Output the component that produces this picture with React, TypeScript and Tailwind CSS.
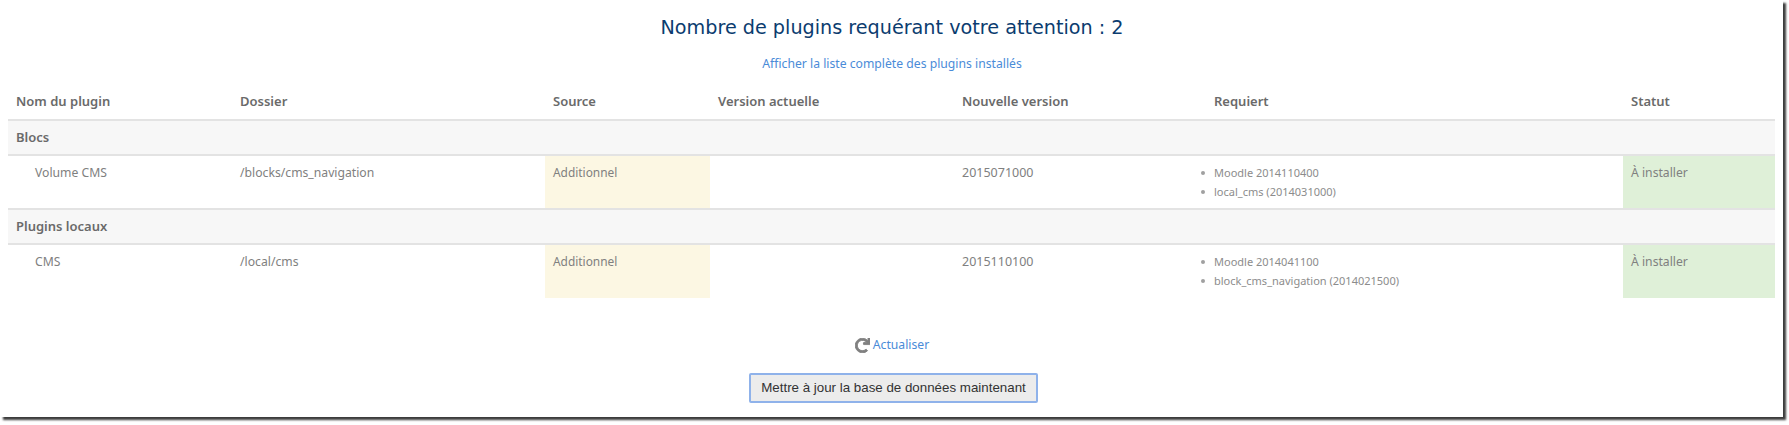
import { FaRedo } from 'react-icons/fa';

const sans = "font-['Noto_Sans',sans-serif]";

type Plugin = {
  group: string;
  name: string;
  folder: string;
  version: string;
  requires: string[];
};

const plugins: Plugin[] = [
  {
    group: 'Blocs',
    name: 'Volume CMS',
    folder: '/blocks/cms_navigation',
    version: '2015071000',
    requires: ['Moodle 2014110400', 'local_cms (2014031000)'],
  },
  {
    group: 'Plugins locaux',
    name: 'CMS',
    folder: '/local/cms',
    version: '2015110100',
    requires: ['Moodle 2014041100', 'block_cms_navigation (2014021500)'],
  },
];

const headers = [
  { label: 'Nom du plugin', width: 'w-[224px]' },
  { label: 'Dossier', width: 'w-[313px]' },
  { label: 'Source', width: 'w-[165px]' },
  { label: 'Version actuelle', width: 'w-[244px]' },
  { label: 'Nouvelle version', width: 'w-[252px]' },
  { label: 'Requiert', width: 'w-[417px]' },
  { label: 'Statut', width: 'w-[152px]' },
];

function PluginRows({ plugin, last }: { plugin: Plugin; last: boolean }) {
  return (
    <>
      <tr className="h-[35px] border-b-2 border-[#e3e3e3] bg-[#f7f7f7]">
        <td colSpan={7} className="px-2 align-middle text-[13px] font-semibold text-[#6a6a6a]">
          {plugin.group}
        </td>
      </tr>
      <tr className={`h-[54px] align-top text-[12.2px] text-[#808080] ${last ? '' : 'border-b-2 border-[#e3e3e3]'}`}>
        <td className="pl-[27px] pt-[8px]">{plugin.name}</td>
        <td className="px-2 pt-[8px]">{plugin.folder}</td>
        <td className="bg-[#fcf7e3] px-2 pt-[8px] text-[11.9px]">Additionnel</td>
        <td className="px-2 pt-[8px]" />
        <td className="px-2 pt-[8px] text-[12.5px]">{plugin.version}</td>
        <td className="px-2 pt-[7px]">
          <ul className="list-none text-[11px] leading-[19px] text-[#8c8c8c]">
            {plugin.requires.map((req) => (
              <li key={req} className="relative">
                <span className="absolute left-[-13px] top-[8px] size-[4px] rounded-full bg-[#a0a0a0]" />
                {req}
              </li>
            ))}
          </ul>
        </td>
        <td className="bg-[#dff0d8] px-2 pt-[8px]">À installer</td>
      </tr>
    </>
  );
}

export default function App() {
  return (
    <div className="h-[425px] w-[1789px] overflow-hidden bg-white">
      <div className={`h-[417px] w-[1783px] bg-white pt-[16px] shadow-[3px_3px_2px_#3c3c3c] ${sans}`}>
        <h2 className="ml-[8px] w-[1768px] text-center font-['DejaVu_Sans',sans-serif] text-[19.2px] leading-[24px] text-[#0b3c6f]">
          Nombre de plugins requérant votre attention : 2
        </h2>
        <p className="ml-[8px] mt-[15px] w-[1768px] text-center text-[12.2px] leading-[18px] text-[#4a8bd8]">
          Afficher la liste complète des plugins installés
        </p>
        <table className="ml-[8px] mt-[12px] w-[1767px] table-fixed border-collapse">
          <colgroup>
            {headers.map((h) => (
              <col key={h.label} className={h.width} />
            ))}
          </colgroup>
          <thead>
            <tr className="h-[35px] border-b-2 border-[#e3e3e3]">
              {headers.map((h) => (
                <th key={h.label} className="px-2 text-left align-middle text-[13px] font-semibold text-[#6a6a6a]">
                  {h.label}
                </th>
              ))}
            </tr>
          </thead>
          <tbody>
            {plugins.map((p, i) => (
              <PluginRows key={p.name} plugin={p} last={i === plugins.length - 1} />
            ))}
          </tbody>
        </table>
        <div className="mt-[37px] flex items-center justify-center gap-[3px] pl-[1px] text-[12.2px] leading-[20px] text-[#4a8bd8]">
          <FaRedo size={15} strokeWidth={30} stroke="#808080" className="text-[#808080]" />
          <span>Actualiser</span>
        </div>
        <div className="ml-[4px] mt-[18px] flex justify-center">
          <button className="h-[30px] w-[289px] rounded-[2px] border-2 border-[#8fb2ea] bg-[#ececec] font-['Liberation_Sans',sans-serif] text-[13.33px] text-[#333]">
            Mettre à jour la base de données maintenant
          </button>
        </div>
      </div>
    </div>
  );
}
